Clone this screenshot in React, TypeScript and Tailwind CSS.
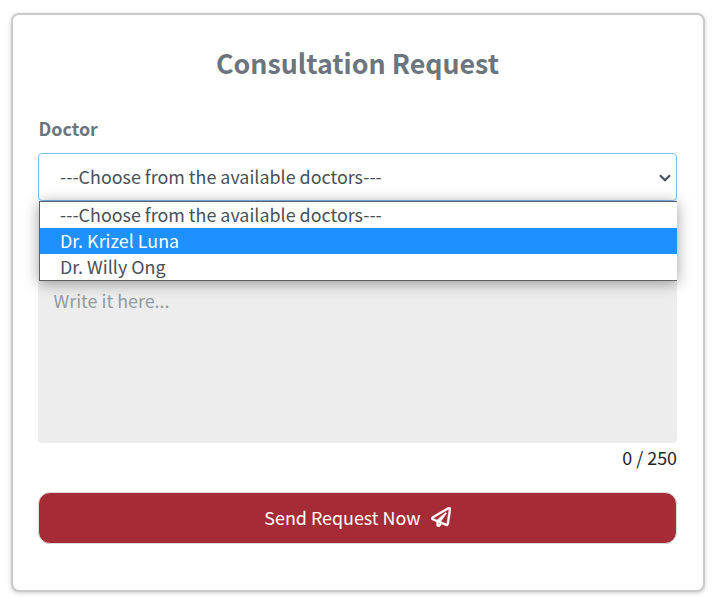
import { FaRegPaperPlane } from "react-icons/fa";

const PROMPT = "---Choose from the available doctors---";
const OPTIONS = [PROMPT, "Dr. Krizel Luna", "Dr. Willy Ong"];

function DoctorSelect() {
  return (
    <div className="relative mt-[10px]">
      <div className="flex h-12 items-center justify-between rounded-[4px] border border-[#80bdff] bg-white pb-0.5 pl-[21px] pr-[5px] text-[#495057]">
        <span className="whitespace-pre">{PROMPT}</span>
        <svg className="mt-[3px]" width="12" height="8" viewBox="0 0 12 8" fill="none" stroke="#495057" strokeWidth="2.2">
          <path d="M1 1.2 6 6.2 11 1.2" />
        </svg>
      </div>
      <ul className="absolute left-px right-0 top-12 z-10 border border-r-0 border-[#5f5f63] bg-white text-[#495057] shadow-[0_2px_14px_rgba(0,0,0,0.38)]">
        {OPTIONS.map((name, i) => (
          <li
            key={name}
            className={
              i === 1
                ? "h-[26px] bg-[#1e90ff] pl-5 leading-[24px] text-white"
                : "h-[26px] pl-5 leading-[24px]"
            }
          >
            {name}
          </li>
        ))}
      </ul>
    </div>
  );
}

export default function App() {
  return (
    <main className="h-[604px] w-[714px] overflow-hidden bg-white pl-[11px] pt-[13px] font-['Noto_Sans_CJK_JP','Noto_Sans_CJK_SC',sans-serif] text-[17.9px] text-[#212529]">
      <section className="flex h-[579px] w-[694px] flex-col rounded-lg border-2 border-[#cacaca] bg-white pl-[25px] pr-[26px] shadow-[0_1px_4px_rgba(0,0,0,0.2)]">
        <h1 className="mt-[28px] h-10 text-center text-[26.8px] font-bold leading-10 text-[#6c757d]">
          Consultation Request
        </h1>
        <span className="mt-[33px] h-[27px] pl-[0.5px] text-[17.9px] font-bold leading-[25px] text-[#6c757d]">Doctor</span>
        <DoctorSelect />
        <textarea
          placeholder="Write it here..."
          className="mt-[76px] h-[166px] w-full shrink-0 resize-none rounded-[4px] bg-[#ededed] px-[15.5px] pt-[10px] leading-[27px] outline-none placeholder:text-[#939ba2]"
        />
        <span className="mt-px h-[27px] text-right leading-[27px]">0 / 250</span>
        <button className="mt-[21px] flex h-[52px] w-full shrink-0 items-center justify-center gap-[10px] rounded-xl border border-[#dcdcdc] bg-[#a52c36] pb-0.5 text-white">
          <span>Send Request Now</span>
          <FaRegPaperPlane className="stroke-white stroke-[12]" size={20} />
        </button>
      </section>
    </main>
  );
}
